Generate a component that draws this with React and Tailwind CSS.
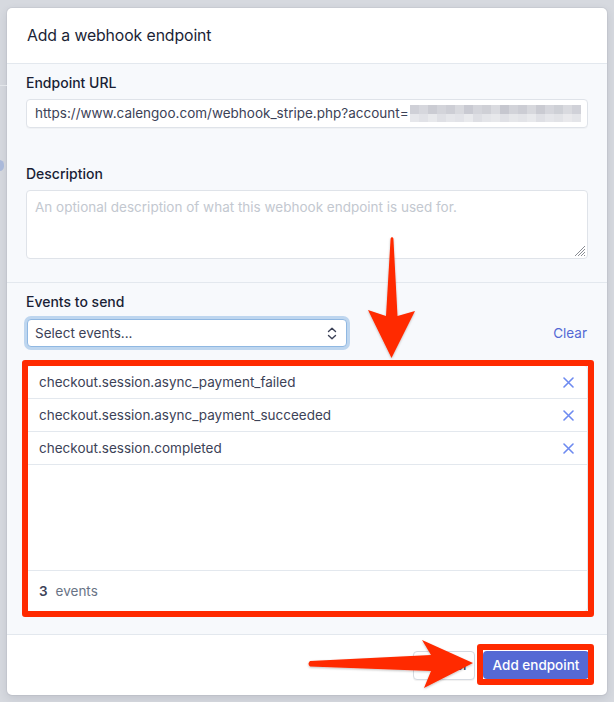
import React from "react";

const topShades = ["#cfd0d7","#d6d7dd","#cbccd3","#d3d4da","#cdced5","#d8d9de","#c9cad2","#d4d5db","#cfd0d6","#dadbe0","#c6c7cf","#d2d3d9","#cccdd4","#d7d8dd","#cacbd2","#d5d6dc","#ced0d6","#d9dadf","#d0d1d8"];
const botShades = ["#e6e7eb","#e1e2e7","#e8e9ec","#dfe0e5","#e5e6ea","#e2e3e8","#e9eaed","#dedfe4","#e4e5e9","#e7e8eb","#e0e1e6","#e6e7ea","#e3e4e8","#e8e9ec","#dfe0e5","#e5e6ea","#e2e3e7","#e9e9ec","#e4e5e9"];

function XIcon() {
  return (
    <svg width="11" height="11" viewBox="0 0 11 11" fill="none">
      <path d="M1 1 L10 10 M10 1 L1 10" stroke="#6d8af0" strokeWidth="1.6" strokeLinecap="round" />
    </svg>
  );
}

function Row({ text }) {
  return (
    <div className="h-[33px] shrink-0 border-b border-[#e3e8ee] flex items-center justify-between pl-[12px] pr-[13px] text-[13.5px] text-[#3c4257]">
      <span>{text}</span>
      <XIcon />
    </div>
  );
}

export default function App() {
  return (
    <div className="relative w-[614px] h-[702px] overflow-hidden bg-[#d6d9df] font-['Inter',sans-serif] pt-[8px] pl-[7px]">
      {/* background page bits */}
      <div className="absolute left-0 top-[85px] w-[7px] h-px bg-[#e3e6ea]" />
      <div className="absolute left-[-5px] top-[160px] w-[9px] h-[11px] rounded-full bg-[#aab9da]" />

      <div className="w-[600px] h-[687px] bg-white rounded-[5px] shadow-[0_0_0_1px_rgba(60,66,87,0.06),0_3px_8px_rgba(60,66,87,0.14)] flex flex-col overflow-hidden">
        {/* header */}
        <div className="h-[56px] shrink-0 flex items-center px-[20px] border-b border-[#e3e8ee]">
          <span className="text-[15.8px] text-[#1a1f36] tracking-[-0.1px]">Add a webhook endpoint</span>
        </div>

        {/* body */}
        <div className="flex-1 bg-[#f7f9fc] flex flex-col border-b border-[#e3e8ee]">
          <div className="px-[19px] pt-[9px] pb-[23px] border-b border-[#e3e8ee] flex flex-col">
            <div className="h-[20px] leading-[20px] text-[14px] text-[#1a1f36] font-medium">Endpoint URL</div>
            <div className="mt-[6px] h-[29px] bg-white border border-[#dfe3e9] rounded-[4px] flex items-center pl-[8px] text-[13.5px] text-[#3c4257] shadow-[0_1px_1px_rgba(0,0,0,0.03)]">
              <span className="whitespace-nowrap">https://www.calengoo.com/webhook_stripe.php?account=</span>
              <div className="ml-[1px] flex flex-col">
                <div className="flex">
                  {topShades.map((c, i) => (
                    <div key={i} className="w-[9px] h-[9px]" style={{ backgroundColor: c }} />
                  ))}
                </div>
                <div className="flex">
                  {botShades.map((c, i) => (
                    <div key={i} className="w-[9px] h-[8px]" style={{ backgroundColor: c }} />
                  ))}
                </div>
              </div>
            </div>
            <div className="mt-[36px] h-[20px] leading-[20px] text-[14px] text-[#1a1f36] font-medium">Description</div>
            <div className="relative mt-[6px] h-[69px] bg-white border border-[#dfe3e9] rounded-[4px] pl-[8px] pt-[6px] text-[13.5px] leading-[20px] text-[#c3c8d0]">
              An optional description of what this webhook endpoint is used for.
              <svg className="absolute right-[1px] bottom-[1px]" width="13" height="13" viewBox="0 0 13 13">
                <path d="M12 2 L2 12 M12 5 L5 12 M12 8 L8 12 M12 11 L11 12" stroke="#8a8d94" strokeWidth="1" />
              </svg>
            </div>
          </div>

          <div className="px-[19px] pt-[9px] flex flex-col">
            <div className="h-[20px] leading-[20px] text-[14px] text-[#1a1f36] font-medium">Events to send</div>
            <div className="mt-[7px] h-[28px] flex items-center justify-between">
              <div className="ml-[1px] w-[320px] h-[28px] bg-white border border-[#90b8e2] rounded-[4px] shadow-[0_0_0_3px_rgba(120,170,225,0.45)] flex items-center justify-between pl-[7px] pr-[9px] text-[13.5px] text-[#3c4257]">
                <span>Select events...</span>
                <svg width="10" height="13" viewBox="0 0 10 13" fill="none">
                  <path d="M1.5 4.5 L5 1.2 L8.5 4.5 M1.5 8.5 L5 11.8 L8.5 8.5" stroke="#3c4257" strokeWidth="1.4" strokeLinecap="round" strokeLinejoin="round" />
                </svg>
              </div>
              <span className="text-[13.5px] text-[#5469d4] mr-[1px]">Clear</span>
            </div>

            <div className="relative mt-[18px] bg-white border border-[#e3e8ee] rounded-[4px] flex flex-col">
              <Row text="checkout.session.async_payment_failed" />
              <Row text="checkout.session.async_payment_succeeded" />
              <Row text="checkout.session.completed" />
              <div className="h-[105px]" />
              <div className="h-[41px] border-t border-[#e3e8ee] flex items-center pl-[12px] text-[13.5px]">
                <span className="font-semibold text-[#3c4257]">3</span>
                <span className="ml-[8px] text-[#697386]">events</span>
              </div>
              <div className="absolute left-[-5px] right-[-7px] top-[-6px] bottom-[-6px] border-[6px] border-[#ff2a00] rounded-[3px] pointer-events-none" />
            </div>
          </div>
        </div>

        {/* footer */}
        <div className="h-[60px] shrink-0 flex items-center justify-end pr-[18px] gap-[8px]">
          <div className="w-[62px] h-[29px] bg-white border border-[#d5dae1] rounded-[4px] flex items-center justify-center text-[13.5px] font-medium text-[#3c4257] shadow-[0_1px_1px_rgba(0,0,0,0.06)]">
            Cancel
          </div>
          <div className="relative w-[106px] h-[28px] bg-[#5469d4] rounded-[4px] flex items-center justify-center text-[13.5px] font-medium text-white">
            Add endpoint
            <div className="absolute left-[-6px] right-[-5px] top-[-7px] bottom-[-6px] border-[6px] border-[#ff2a00] rounded-[3px] pointer-events-none" />
          </div>
        </div>
      </div>

      {/* annotation arrows */}
      <svg className="absolute left-0 top-0 pointer-events-none" width="614" height="702" viewBox="0 0 614 702">
        <defs>
          <filter id="sh" x="-20%" y="-20%" width="140%" height="140%">
            <feDropShadow dx="0" dy="1" stdDeviation="1" floodColor="#000" floodOpacity="0.25" />
          </filter>
        </defs>
        <g filter="url(#sh)" fill="#ff2a00">
          <path d="M390.6 238.5 Q392 235.5 393.4 238.5 L397.5 316 L415 311 L391.5 358 L368 310 L386 316 Z" />
          <path d="M310 661 L431 655 L422 640 L473 663 L424 688 L431 671 L310 666.5 Q307 663.8 310 661 Z" />
        </g>
      </svg>
    </div>
  );
}
